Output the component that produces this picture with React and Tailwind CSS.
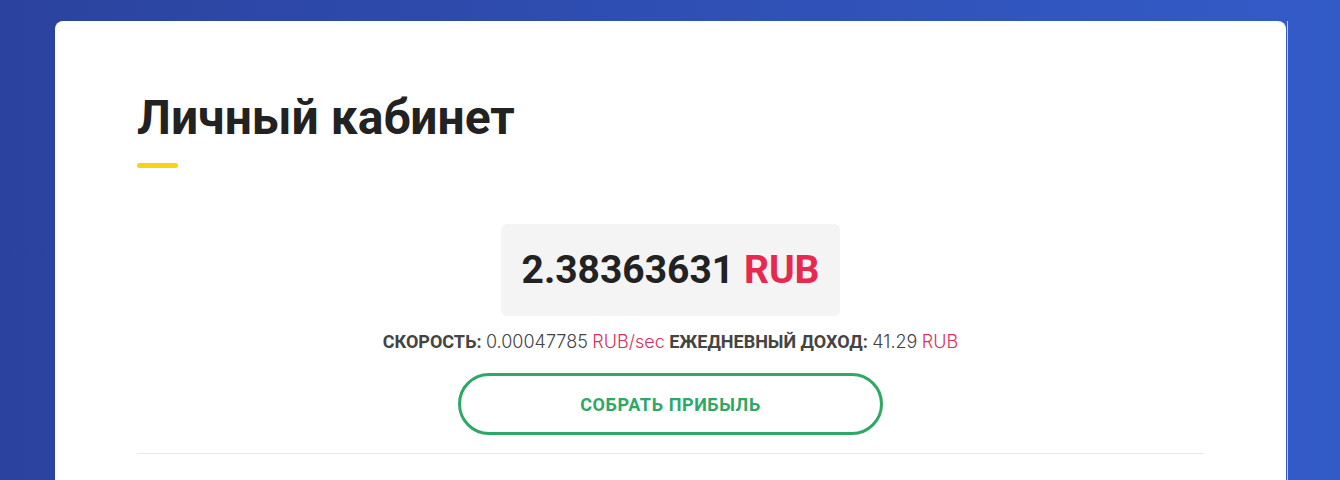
export default function App() {
  return (
    <div
      className="flex min-h-screen bg-gradient-to-r from-[#2b439e] to-[#335bc8] pl-[55px] pr-[52px] pt-[21px]"
      style={{ fontFamily: "Roboto, 'Noto Sans', sans-serif" }}
    >
      <div className="h-[470px] flex-1 rounded-t-lg bg-white px-[82px] pt-[69px]">
        <h1 className="text-[48px] font-bold leading-[56px] text-[#222]">Личный кабинет</h1>
        <div className="mt-[17px] h-[5px] w-[41px] rounded-full bg-[#f7d417]" />

        <div className="mt-[56px] flex flex-col items-center">
          <div className="flex h-[92px] w-[339px] items-center justify-center rounded-md bg-[#f4f4f4]">
            <span className="text-[39px] font-bold text-[#222]">
              2.38363631 <span className="text-[#e8294f]">RUB</span>
            </span>
          </div>

          <p className="mt-[13px] text-[18px] leading-[26px] text-[#444]">
            <span className="font-bold">СКОРОСТЬ:</span>{" "}
            <span className="font-light" style={{ fontFamily: "Inter, sans-serif" }}>0.00047785</span>{" "}
            <span className="font-light text-[#d8305a]" style={{ fontFamily: "Inter, sans-serif" }}>RUB/sec</span>{" "}
            <span className="font-bold">ЕЖЕДНЕВНЫЙ ДОХОД:</span>{" "}
            <span className="font-light" style={{ fontFamily: "Inter, sans-serif" }}>41.29</span>{" "}
            <span className="font-light text-[#d8305a]" style={{ fontFamily: "Inter, sans-serif" }}>RUB</span>
          </p>

          <button className="mt-[18px] flex h-[62px] w-[425px] items-center justify-center rounded-full border-[3px] border-[#2ea865] text-[18px] font-bold uppercase tracking-[0.6px] text-[#2ea865]">
            Собрать прибыль
          </button>
        </div>

        <div className="mt-[18px] h-px bg-[#e8e8e8]" />
      </div>
      <div className="ml-px h-[470px] w-px bg-[#bfcbef]" />
    </div>
  )
}
